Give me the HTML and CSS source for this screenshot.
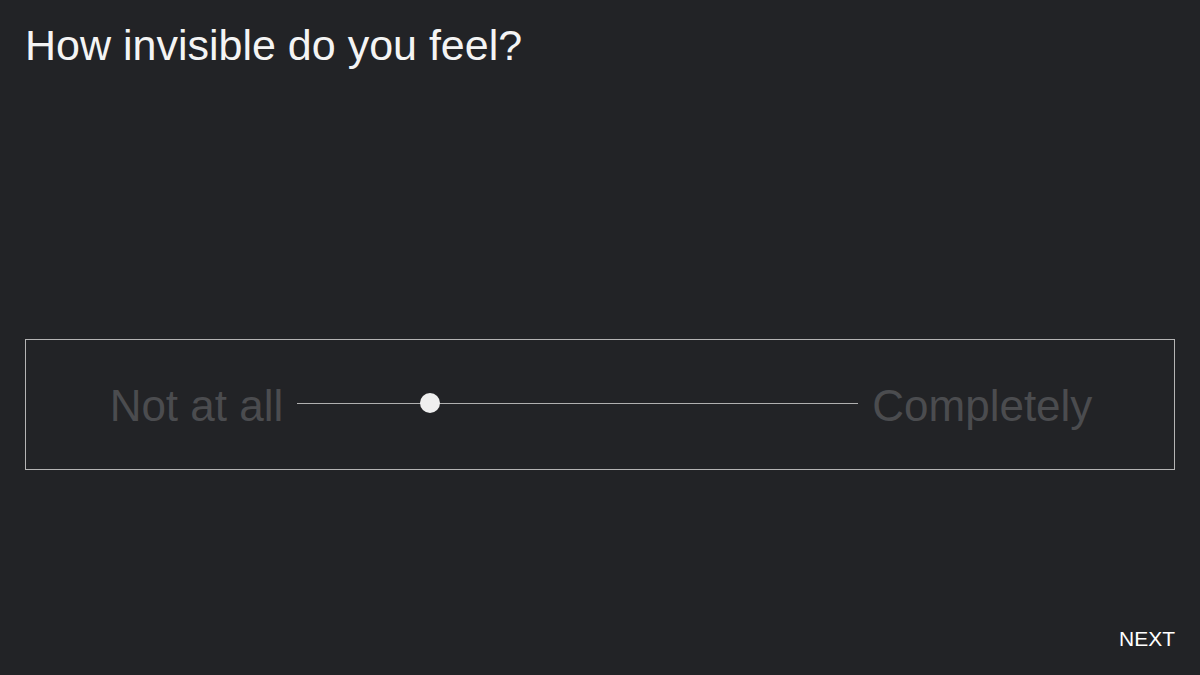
FILE: index.html
```html
<!DOCTYPE html>
<html lang="en">
<head>
<meta charset="utf-8">
<title>How invisible do you feel?</title>
<link rel="stylesheet" href="styles.css">
</head>
<body>
<main class="screen">
  <h1 class="question">How invisible do you feel?</h1>
  <section class="scale">
    <span class="scale-label">Not at all</span>
    <div class="track">
      <div class="track-line"></div>
      <div class="knob" style="left: 123px;"></div>
    </div>
    <span class="scale-label">Completely</span>
  </section>
  <footer class="footer">
    <button class="next">NEXT</button>
  </footer>
</main>
</body>
</html>
```

FILE: styles.css
```css
* { box-sizing: border-box; }
html, body {
  margin: 0;
  height: 100%;
  background: #222326;
}
body {
  font-family: "Liberation Sans", Arial, sans-serif;
  color: #f4f4f4;
}
.screen {
  height: 675px;
  display: flex;
  flex-direction: column;
  padding: 21px 25px 0 25px;
}
.question {
  margin: 0;
  font-size: 43px;
  font-weight: 400;
  line-height: 1.15;
  letter-spacing: 0;
}
.scale {
  margin-top: 269px;
  height: 131px;
  border: 1px solid #b4b4b4;
  display: flex;
  align-items: center;
  justify-content: center;
  gap: 14px;
  padding-left: 2px;
}
.scale-label {
  font-size: 44px;
  line-height: 1.15;
  color: #4b4c4f;
  padding-top: 3px;
}
.track {
  position: relative;
  width: 561px;
  height: 20px;
  margin-bottom: 3px;
  display: flex;
  align-items: center;
}
.track-line {
  width: 100%;
  height: 1px;
  background: #b0b0b0;
}
.knob {
  position: absolute;
  top: 0;
  width: 20px;
  height: 20px;
  border-radius: 50%;
  background: #efefef;
}
.footer {
  margin-top: auto;
  display: flex;
  justify-content: flex-end;
  padding-bottom: 24px;
}
.next {
  background: none;
  border: none;
  padding: 0;
  font-family: "Liberation Sans", Arial, sans-serif;
  font-size: 21px;
  line-height: 1.15;
  color: #ffffff;
  cursor: pointer;
}
```
